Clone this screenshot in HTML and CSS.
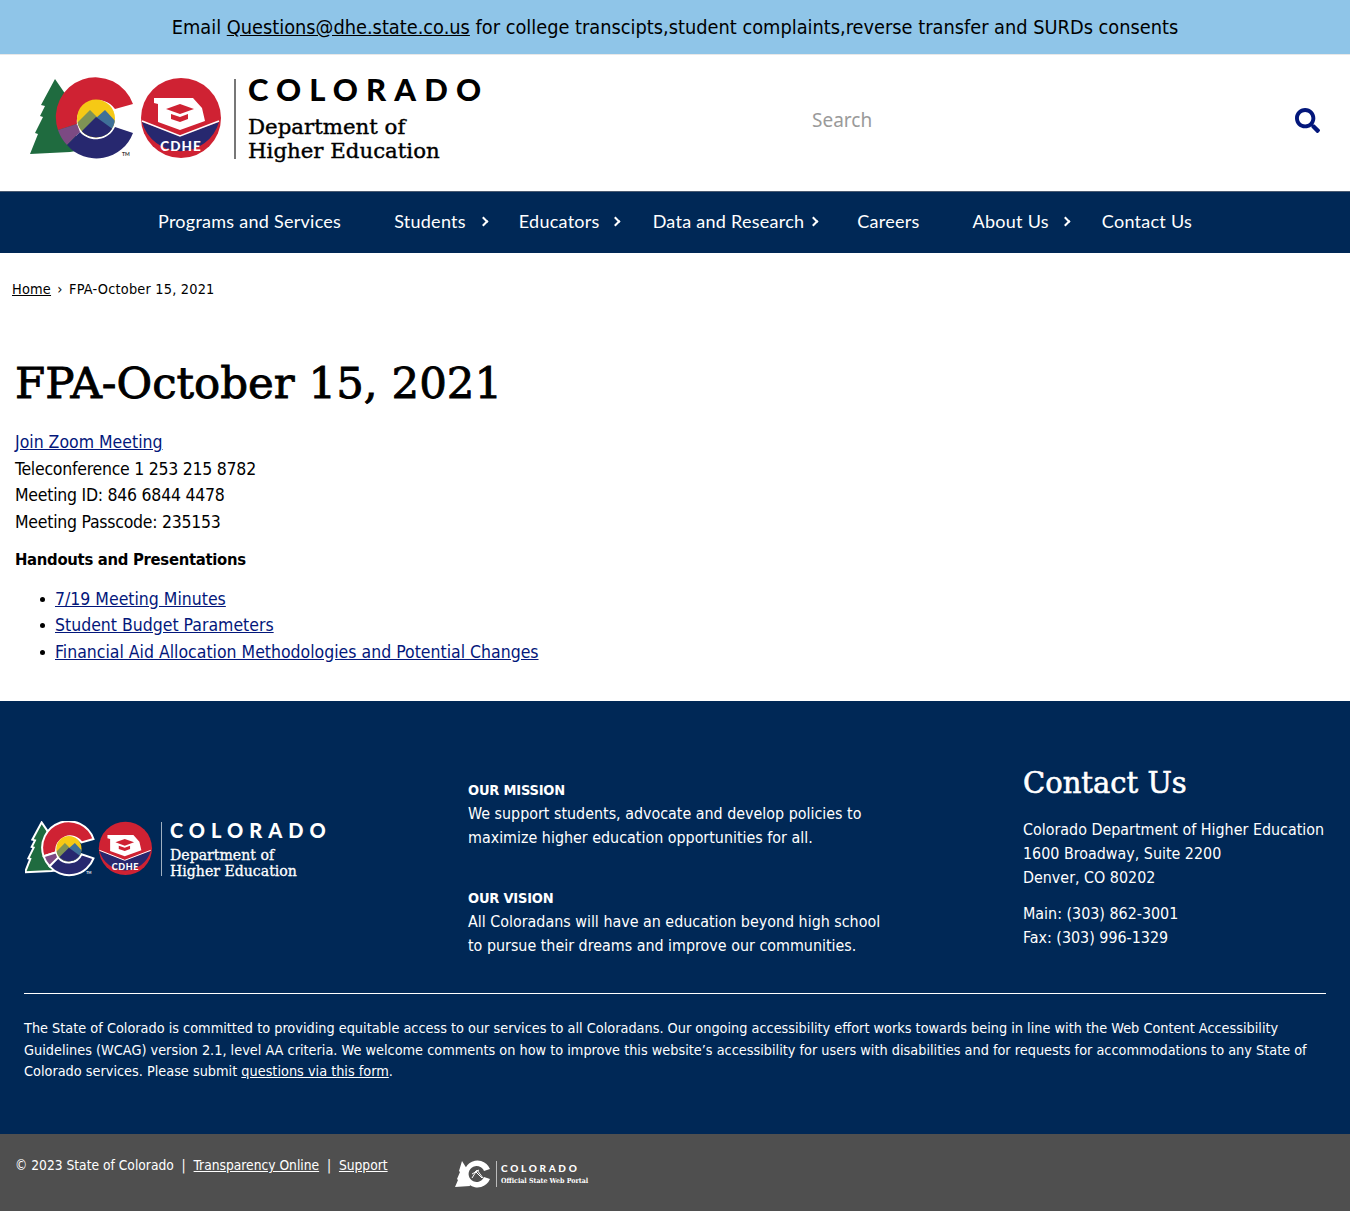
FILE: index.html
```html
<!DOCTYPE html>
<html lang="en">
<head>
    <meta charset="UTF-8">
    <meta name="viewport" content="width=device-width, initial-scale=1.0">
    <title>FPA-October 15, 2021</title>
    <link rel="stylesheet" href="styles.css">
</head>
<body>
    <!-- Shared state + CDHE logo, used in the header and the footer -->
    <svg class="svg-defs" aria-hidden="true">
        <defs>
            <clipPath id="sceneClip"><circle cx="66" cy="41.5" r="19"/></clipPath>
        </defs>
        <symbol id="cdheMark" viewBox="0 0 200 84">
            <path d="M25 2 L36 18 L46 30 L46 74 L40 75 L0 77 L8 57 L5 56 L13 40 L10 39 L15 29 L11 28 Z" fill="#1f6b3f"/>
            <path d="M103 27 A39 39 0 0 0 28 53 L47 47 A21 21 0 0 1 85 32 Z" fill="#cf2233"/>
            <path d="M28 53 A39 39 0 0 0 37 68 L50 55 L47 47 Z" fill="#7c4a83"/>
            <path d="M37 68 A39 39 0 0 0 103 56 L85 50 A21 21 0 0 1 50 55 Z" fill="#27286f"/>
            <g class="mark-detail">
                <g clip-path="url(#sceneClip)">
                    <rect x="46" y="22" width="40" height="40" fill="#f6c915"/>
                    <path d="M46 47 L60 33 L68 41 L60 62 L46 62 Z" fill="#7f9355"/>
                    <path d="M66 41 L75 33 L88 47 L88 62 L70 62 Z" fill="#3f7098"/>
                    <path d="M46 60 L66 40 L88 56 L88 64 L46 64 Z" fill="#27286f"/>
                </g>
                <circle cx="151" cy="41" r="40" fill="#cf2233"/>
                <path d="M112 45 L150 59 L189 45 A40 40 0 0 1 112 45 Z" fill="#27286f"/>
                <path d="M112 44 L150 59 L189 44" fill="none" stroke="#fff" stroke-width="1.5"/>
                <path d="M124 21 L163 21 L172 31 L175 44 L150 53 L128 45 L128 27 L124 26 Z" fill="#fff"/>
                <path d="M150 27 L164 32 L150 37 L136 32 Z" fill="#cf2233"/>
                <path d="M141 37 L150 40 L158 37 L158 42 L150 45 L141 42 Z" fill="#cf2233"/>
            </g>
        </symbol>
    </svg>

    <div class="alert-bar">Email <a href="#">Questions@dhe.state.co.us</a> for college transcipts,student complaints,reverse transfer and SURDs consents</div>

    <header class="site-header">
        <a href="#" class="logo">
            <svg class="logo-mark" viewBox="0 0 200 84" width="200" height="84" aria-hidden="true">
                <use href="#cdheMark" width="200" height="84"/>
                <text x="92" y="79" class="mark-tm">TM</text>
                <text x="151" y="74" class="mark-badge">CDHE</text>
            </svg>
            <span class="logo-text">
                <span class="logo-state">COLORADO</span>
                <span class="logo-dept">Department of<br>Higher Education</span>
            </span>
        </a>
        <div class="search">
            <span class="search-input">Search</span>
            <svg class="search-icon" viewBox="0 0 512 512" width="25" height="25" aria-hidden="true">
                <path d="M505 442.7L405.3 343c-4.5-4.5-10.6-7-17-7H372c27.6-35.3 44-79.7 44-128C416 93.1 322.9 0 208 0S0 93.1 0 208s93.1 208 208 208c48.3 0 92.7-16.4 128-44v16.3c0 6.4 2.5 12.5 7 17l99.7 99.7c9.4 9.4 24.6 9.4 33.9 0l28.3-28.3c9.4-9.4 9.4-24.6.1-34zM208 336c-70.7 0-128-57.2-128-128 0-70.7 57.2-128 128-128 70.7 0 128 57.2 128 128 0 70.7-57.2 128-128 128z"/>
            </svg>
        </div>
    </header>

    <nav class="main-nav">
        <ul>
            <li><a href="#">Programs and Services</a></li>
            <li class="has-sub"><a href="#">Students</a></li>
            <li class="has-sub"><a href="#">Educators</a></li>
            <li class="has-sub"><a href="#">Data and Research</a></li>
            <li><a href="#">Careers</a></li>
            <li class="has-sub"><a href="#">About Us</a></li>
            <li><a href="#">Contact Us</a></li>
        </ul>
    </nav>

    <div class="breadcrumb"><a href="#">Home</a> <span class="crumb-sep">›</span> FPA-October 15, 2021</div>

    <main class="content">
        <h1>FPA-October 15, 2021</h1>
        <p class="meeting">
            <a href="#">Join Zoom Meeting</a><br>
            Teleconference 1 253 215 8782<br>
            Meeting ID: 846 6844 4478<br>
            Meeting Passcode: 235153
        </p>
        <p class="handouts"><strong>Handouts and Presentations</strong></p>
        <ul>
            <li><a href="#">7/19 Meeting Minutes</a></li>
            <li><a href="#">Student Budget Parameters</a></li>
            <li><a href="#">Financial Aid Allocation Methodologies and Potential Changes</a></li>
        </ul>
    </main>

    <footer>
        <div class="footer-main">
            <div class="footer-cols">
                <div class="footer-logo">
                    <svg class="footer-mark" viewBox="0 0 200 84" width="133" height="56" aria-hidden="true">
                        <use href="#cdheMark" width="200" height="84"/>
                        <text x="92" y="79" class="mark-tm">TM</text>
                        <text x="151" y="74" class="mark-badge">CDHE</text>
                    </svg>
                    <span class="logo-text footer-logo-text">
                        <span class="logo-state">COLORADO</span>
                        <span class="logo-dept">Department of<br>Higher Education</span>
                    </span>
                </div>
                <div class="footer-mission">
                    <p><span class="label">OUR MISSION</span><br>We support students, advocate and develop policies to<br>maximize higher education opportunities for all.</p>
                    <p><span class="label">OUR VISION</span><br>All Coloradans will have an education beyond high school<br>to pursue their dreams and improve our communities.</p>
                </div>
                <div class="footer-contact">
                    <h2>Contact Us</h2>
                    <p>Colorado Department of Higher Education<br>1600 Broadway, Suite 2200<br>Denver, CO 80202</p>
                    <p>Main: (303) 862-3001<br>Fax: (303) 996-1329</p>
                </div>
            </div>
            <div class="accessibility">
                The State of Colorado is committed to providing equitable access to our services to all Coloradans. Our ongoing accessibility effort works towards being in line with the Web Content Accessibility Guidelines (WCAG) version 2.1, level AA criteria. We welcome comments on how to improve this website’s accessibility for users with disabilities and for requests for accommodations to any State of Colorado services. Please submit <a href="#">questions via this form</a>.
            </div>
        </div>
        <div class="footer-bottom">
            <div class="copyright">© 2023 State of Colorado &nbsp;|&nbsp; <a href="#">Transparency Online</a> &nbsp;|&nbsp; <a href="#">Support</a></div>
            <div class="portal">
                <svg viewBox="0 0 37 28" width="37" height="28" aria-hidden="true">
                    <path d="M7 1 L12 9 L15 26 L0 27 L3 20 L2 19 L5 12 L4 11 Z" fill="#fff"/>
                    <path d="M35 9 A13.5 13.5 0 1 0 35 19 L29 17 A8 8 0 1 1 29 11 Z" fill="#fff"/>
                    <path d="M17 18 L22 10 L28 18 M20 11 L27 18 M17 14 L24 10" fill="none" stroke="#fff" stroke-width="1"/>
                </svg>
                <span class="portal-text">
                    <span class="portal-state">COLORADO</span>
                    <span class="portal-sub">Official State Web Portal</span>
                </span>
            </div>
        </div>
    </footer>
</body>
</html>
```
FILE: styles.css
```css
body {
    margin: 0;
    font-family: "DejaVu Sans", sans-serif;
    font-stretch: condensed;
    font-size: 17.5px;
    line-height: 26.5px;
    color: #000;
    background: #fff;
}

.svg-defs {
    position: absolute;
    width: 0;
    height: 0;
}

.alert-bar {
    height: 54px;
    line-height: 55px;
    background: #8fc5e8;
    text-align: center;
    font-size: 19.8px;
    border-bottom: 1px solid #e8e8e8;
}

.alert-bar a {
    color: #000;
}

/* Header */
.site-header {
    display: flex;
    justify-content: space-between;
    align-items: center;
    box-sizing: border-box;
    height: 136px;
    padding: 0 30px 8px;
}

.logo {
    display: flex;
    align-items: center;
    color: #000;
    text-decoration: none;
}

.logo-mark {
    margin-right: 4px;
    display: block;
}

.mark-badge {
    font-family: "Lato", sans-serif;
    font-stretch: normal;
    font-weight: 900;
    font-size: 13.5px;
    letter-spacing: 1px;
    fill: #fff;
    text-anchor: middle;
}

.mark-tm {
    font-family: "Lato", sans-serif;
    font-stretch: normal;
    font-weight: 700;
    font-size: 5px;
    fill: #333;
}

.logo-text {
    display: flex;
    flex-direction: column;
    height: 80px;
    border-left: 2px solid #777;
    padding-left: 12px;
}

.logo-state {
    font-family: "Lato", sans-serif;
    font-stretch: normal;
    font-weight: 900;
    font-size: 31px;
    line-height: 20px;
    letter-spacing: 8.1px;
    white-space: nowrap;
}

.logo-dept {
    font-family: "DejaVu Serif", serif;
    font-stretch: normal;
    font-weight: 400;
    -webkit-text-stroke: 0.4px currentColor;
    font-size: 21.3px;
    line-height: 24px;
    margin-top: 16px;
    white-space: nowrap;
}

.search {
    display: flex;
    justify-content: space-between;
    align-items: center;
    width: 508px;
    margin-top: 2px;
}

.search-input {
    color: #9a9a9a;
    font-family: "Noto Sans", sans-serif;
    font-stretch: normal;
    font-size: 19px;
}

.search-icon {
    fill: #03177b;
    display: block;
}

/* Main nav */
.main-nav {
    background: #002856;
    box-sizing: border-box;
    height: 62px;
    border-top: 1px solid #4a5a70;
}

.main-nav ul {
    display: flex;
    gap: 53px;
    margin: 0 130px;
    padding: 0 28px;
    height: 60px;
    list-style: none;
    align-items: center;
}

.main-nav li {
    position: relative;
    --chev: -21px;
}

.main-nav li:nth-child(3) {
    --chev: -19px;
}

.main-nav li:nth-child(4) {
    --chev: -13px;
}

.main-nav li:nth-child(6) {
    --chev: -20px;
}

.main-nav a {
    font-family: "Lato", sans-serif;
    font-stretch: normal;
    color: #fff;
    font-size: 18px;
    letter-spacing: 0.26px;
    text-decoration: none;
    white-space: nowrap;
}

.main-nav .has-sub::after {
    content: "";
    position: absolute;
    right: var(--chev);
    top: 10px;
    width: 5px;
    height: 5px;
    border-top: 2px solid #fff;
    border-right: 2px solid #fff;
    transform: rotate(45deg);
}

.breadcrumb {
    padding: 24px 12px 0;
    font-size: 14.4px;
    line-height: 24px;
    letter-spacing: 0.2px;
}

.breadcrumb a {
    color: #000;
}

.crumb-sep {
    margin: 0 2px;
}

/* Page content */
.content {
    padding: 0 15px 36px;
}

.content h1 {
    font-family: "DejaVu Serif", serif;
    font-stretch: normal;
    font-weight: 400;
    -webkit-text-stroke: 0.9px #000;
    font-size: 43.5px;
    line-height: 54px;
    margin: 55px 0 19px;
}

.content a {
    color: #03177b;
}

.content p {
    margin: 0 0 12px;
}

.content .meeting {
    margin-bottom: 11px;
    letter-spacing: -0.25px;
}

.meeting a {
    letter-spacing: 0;
}

.content strong {
    font-size: 16.5px;
    letter-spacing: -0.3px;
}

.content ul {
    margin: 0;
    padding-left: 40px;
    list-style: none;
}

.content li {
    position: relative;
}

.content li::before {
    content: "";
    position: absolute;
    left: -15px;
    top: 11px;
    width: 5px;
    height: 5px;
    border-radius: 50%;
    background: #000;
}

/* Footer */
.footer-main {
    background: #002856;
    color: #fff;
    height: 433px;
    box-sizing: border-box;
    padding: 0 24px;
    font-size: 15.9px;
    line-height: 24px;
}

.footer-cols {
    display: flex;
    height: 293px;
    border-bottom: 1px solid #fff;
    box-sizing: border-box;
}

.footer-logo {
    display: flex;
    align-items: center;
    width: 444px;
    height: 60px;
    margin-top: 118px;
    padding-left: 1px;
    box-sizing: border-box;
}

.footer-mark {
    margin-right: 3px;
    display: block;
    stroke: #fff;
    stroke-width: 3px;
}

.mark-detail {
    stroke: none;
}

.footer-mark text {
    stroke: none;
}

.footer-mark .mark-tm {
    fill: #fff;
}

.footer-logo-text {
    height: 54px;
    border-left: 1px solid #9fb0c0;
    padding-left: 8px;
}

.footer-logo-text .logo-state {
    font-size: 20px;
    line-height: 16px;
    letter-spacing: 6px;
}

.footer-logo-text .logo-dept {
    font-size: 14.1px;
    line-height: 16px;
    margin-top: 9px;
    -webkit-text-stroke: 0.3px #fff;
}

.footer-mission {
    width: 555px;
    padding-top: 77px;
    white-space: nowrap;
}

.footer-mission p {
    margin: 0 0 36px;
}

.label {
    font-size: 14.5px;
    font-weight: 700;
    letter-spacing: -0.2px;
}

.footer-contact {
    padding-top: 62px;
    white-space: nowrap;
}

.footer-contact h2 {
    font-family: "DejaVu Serif", serif;
    font-stretch: normal;
    font-weight: 400;
    -webkit-text-stroke: 0.6px #fff;
    font-size: 29px;
    line-height: 40px;
    margin: 0 0 15px;
}

.footer-contact p {
    margin: 0 0 12px;
}

.accessibility {
    padding-top: 24px;
    font-size: 14.35px;
    line-height: 21.6px;
}

.accessibility a,
.footer-bottom a {
    color: #fff;
}

.footer-bottom {
    display: flex;
    height: 77px;
    background: #4f4f4f;
    color: #fff;
    padding: 0 15px;
    font-size: 13.7px;
    line-height: 21.6px;
}

.copyright {
    width: 440px;
    padding-top: 21px;
}

.portal {
    display: flex;
    align-items: center;
    height: 30px;
    margin-top: 25px;
}

.portal-text {
    display: flex;
    flex-direction: column;
    border-left: 1px solid #bbb;
    padding-left: 4px;
    margin-left: 4px;
}

.portal-state {
    font-family: "Lato", sans-serif;
    font-stretch: normal;
    font-weight: 900;
    font-size: 10px;
    line-height: 14px;
    letter-spacing: 2.7px;
}

.portal-sub {
    font-family: "DejaVu Serif", serif;
    font-weight: 700;
    font-size: 7px;
    line-height: 12px;
    white-space: nowrap;
}
```
